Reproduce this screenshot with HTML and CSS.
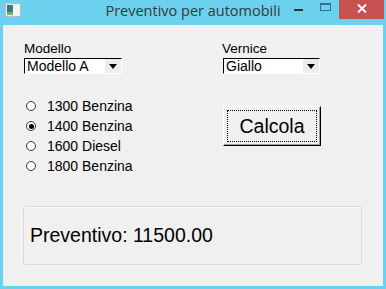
FILE: index.html
```html
<!DOCTYPE html>
<html lang="it">
  <head>
    <meta charset="UTF-8" />
    <meta name="viewport" content="width=device-width, initial-scale=1.0" />
    <title>Preventivo per automobili</title>
    <link rel="stylesheet" href="styles.css">
  </head>
  <body>
    <div class="window">
      <div class="titlebar">
        <div class="title-left">
          <svg class="app-icon" width="16" height="14" viewBox="0 0 16 14">
            <rect x="0.5" y="0.5" width="15" height="13" fill="#e9eef0" stroke="#b3c2c9" />
            <rect x="2" y="2" width="6" height="10" fill="#2f8a6e" />
            <rect x="2" y="2" width="3" height="10" fill="#3a6f8f" />
            <rect x="8" y="2" width="6" height="10" fill="#f4f6f6" />
            <rect x="2" y="9" width="6" height="3" fill="#6fb26a" />
          </svg>
        </div>
        <div class="title">Preventivo per automobili</div>
        <div class="title-right">
          <span class="tb-cell"><span class="tb-min"></span></span>
          <span class="tb-cell"><span class="tb-max"></span></span>
          <span class="tb-close">
            <svg width="10" height="9" viewBox="0 0 10 9">
              <path d="M1 0.5 L9 8.5 M9 0.5 L1 8.5" stroke="#fff" stroke-width="2" />
            </svg>
          </span>
        </div>
      </div>

      <div class="client">
        <div class="top">
          <div class="col col-left">
            <div class="lbl">Modello</div>
            <div class="combo">
              <span class="combo-text">Modello A</span>
              <span class="combo-btn"><span class="arrow"></span></span>
            </div>
            <ul class="radios">
              <li class="radio"><span class="dot"></span>1300 Benzina</li>
              <li class="radio checked"><span class="dot"></span>1400 Benzina</li>
              <li class="radio"><span class="dot"></span>1600 Diesel</li>
              <li class="radio"><span class="dot"></span>1800 Benzina</li>
            </ul>
          </div>
          <div class="col col-right">
            <div class="lbl">Vernice</div>
            <div class="combo">
              <span class="combo-text">Giallo</span>
              <span class="combo-btn"><span class="arrow"></span></span>
            </div>
            <button class="calc"><span class="focus">Calcola</span></button>
          </div>
        </div>

        <div class="result">Preventivo: 11500.00</div>
      </div>
    </div>
  </body>
</html>
```

FILE: styles.css
```css
* {
  margin: 0;
  padding: 0;
  box-sizing: border-box;
}

body {
  width: 386px;
  height: 289px;
  background-color: #6bd1ef;
  font-family: "Liberation Sans", Arial, sans-serif;
  color: #000;
  overflow: hidden;
}

.window {
  display: flex;
  flex-direction: column;
  height: 289px;
}

/* title bar */
.titlebar {
  height: 25px;
  display: grid;
  grid-template-columns: 1fr auto 1fr;
}

.title-left {
  padding: 3px 0 0 5px;
}

.app-icon {
  display: block;
}

.title {
  font-family: "Open Sans", "Noto Sans", sans-serif;
  font-size: 14.5px;
  line-height: 20px;
  color: #383838;
  padding-top: 1px;
}

.title-right {
  display: flex;
  justify-content: flex-end;
  align-items: flex-start;
  padding-right: 2px;
}

.tb-cell {
  width: 27px;
  height: 20px;
  display: flex;
  justify-content: center;
}

.tb-min {
  width: 9px;
  height: 2px;
  margin-top: 9px;
  background-color: #333;
}

.tb-max {
  width: 11px;
  height: 8px;
  margin-top: 3px;
  border: 1px solid #3d6f88;
  border-top-width: 2px;
}

.tb-close {
  width: 45px;
  height: 19px;
  background-color: #c75050;
  display: flex;
  justify-content: center;
  align-items: center;
  padding-bottom: 2px;
}

/* client area */
.client {
  flex: 1;
  margin: 0 3px 3px 3px;
  background-color: #f0f0f0;
  padding: 16px 0 0 20px;
}

.top {
  display: grid;
  grid-template-columns: 199px 98px;
  padding-left: 1px;
  height: 135px;
}

.lbl {
  font-size: 13.5px;
  line-height: 15px;
  height: 15px;
}

.col-right .lbl {
  margin-left: -1px;
}

.combo {
  display: flex;
  width: 98px;
  height: 16px;
  margin-top: 2px;
  background-color: #fff;
  border: 1px solid;
  border-color: #000 #fff #fff #000;
}

.col-right .combo {
  width: 97px;
}

.combo-text {
  flex: 1;
  font-size: 14px;
  line-height: 14px;
  padding-left: 2px;
}

.combo-btn {
  width: 16px;
  background-color: #ececec;
  display: flex;
  justify-content: center;
  align-items: center;
}

.arrow {
  width: 0;
  height: 0;
  border-left: 4.5px solid transparent;
  border-right: 4.5px solid transparent;
  border-top: 5px solid #000;
}

.radios {
  list-style: none;
  margin-top: 22px;
}

.radio {
  display: flex;
  align-items: center;
  height: 20px;
  font-size: 14px;
}

.dot {
  width: 10px;
  height: 10px;
  margin: 0 11px 0 2px;
  border: 1px solid #333;
  border-radius: 50%;
  background-color: #fff;
  display: flex;
  justify-content: center;
  align-items: center;
}

.checked .dot::after {
  content: "";
  width: 5px;
  height: 5px;
  border-radius: 50%;
  background-color: #000;
}

.calc {
  margin-top: 32px;
  width: 98px;
  height: 40px;
  padding: 3px;
  background-color: #f0f0f0;
  border: 1px solid;
  border-color: #fff #000 #000 #fff;
  box-shadow: inset -1px -1px #a0a0a0;
  font-family: inherit;
  display: flex;
}

.focus {
  flex: 1;
  outline: 1px dotted #000;
  outline-offset: -1px;
  display: flex;
  justify-content: center;
  align-items: center;
  font-size: 19.5px;
}

/* result box */
.result {
  margin-top: 30px;
  width: 339px;
  height: 59px;
  border: 1px solid #d9d9d9;
  border-radius: 3px;
  box-shadow: inset 0 1px #fafafa;
  display: flex;
  align-items: center;
  padding-left: 6px;
  font-size: 19.5px;
}
```
